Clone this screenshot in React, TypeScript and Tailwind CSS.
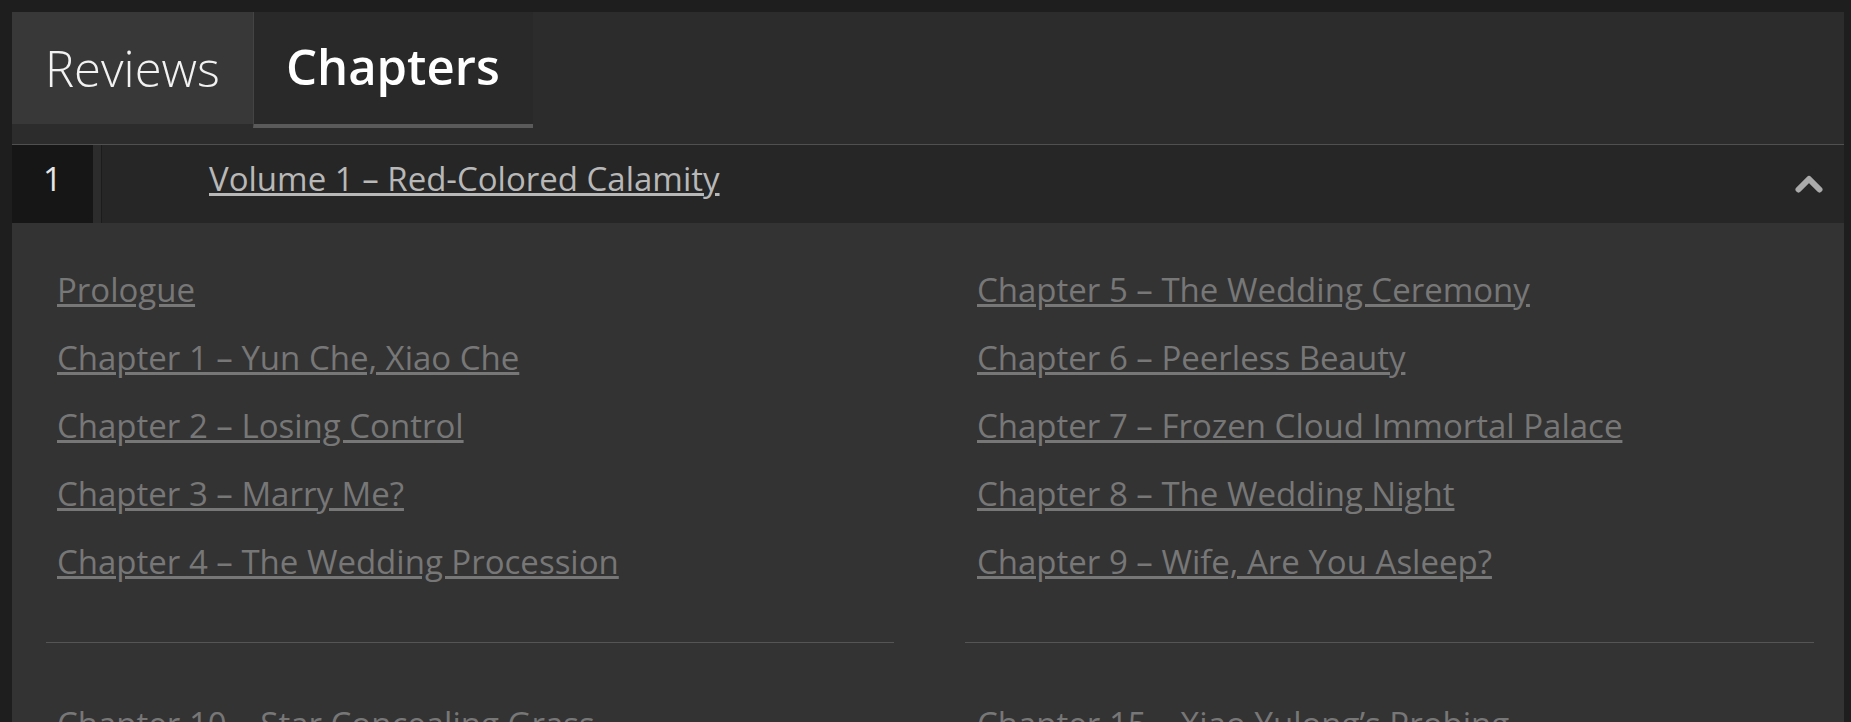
import React from "react";

const font = { fontFamily: '"Open Sans", "Noto Sans", sans-serif' };

const groups: [string[], string[]][] = [
  [
    [
      "Prologue",
      "Chapter 1 – Yun Che, Xiao Che",
      "Chapter 2 – Losing Control",
      "Chapter 3 – Marry Me?",
      "Chapter 4 – The Wedding Procession",
    ],
    [
      "Chapter 5 – The Wedding Ceremony",
      "Chapter 6 – Peerless Beauty",
      "Chapter 7 – Frozen Cloud Immortal Palace",
      "Chapter 8 – The Wedding Night",
      "Chapter 9 – Wife, Are You Asleep?",
    ],
  ],
  [
    [
      "Chapter 10 – Star Concealing Grass",
      "Chapter 11 – Grandfather’s Worries",
      "Chapter 12 – Heavenly Poison Pearl",
      "Chapter 13 – Evil God’s Profound Veins",
      "Chapter 14 – The Seven Wheels",
    ],
    [
      "Chapter 15 – Xiao Yulong’s Probing",
      "Chapter 16 – Sudden Change",
      "Chapter 17 – Bloody Night",
      "Chapter 18 – Facing Death",
      "Chapter 19 – Breaking Through",
    ],
  ],
];

function Column({ items, first, right }: { items: string[]; first: boolean; right: boolean }) {
  return (
    <div className="flex flex-col">
      <ul className={first ? "pt-[33px]" : "pt-[47px]"}>
        {items.map((t) => (
          <li
            key={t}
            className={
              right
                ? "pl-[12px] h-[68px] leading-[68px] text-[33px] text-[#777777] whitespace-nowrap"
                : "pl-[11px] h-[68px] leading-[68px] text-[33px] text-[#777777] whitespace-nowrap"
            }
          >
            <a href="#" className="underline">
              {t}
            </a>
          </li>
        ))}
      </ul>
      <div className="mt-[46px] h-px bg-[#555555]" />
    </div>
  );
}

export default function App() {
  return (
    <div className="w-[1851px] h-[722px] overflow-hidden bg-[#1e1e1e] pl-[12px] pr-[7px] pt-[12px]" style={font}>
      <div className="bg-[#2c2c2c] h-[800px]">
        {/* Tabs */}
        <div className="flex h-[133px] border-b border-[#505050]">
          <div className="w-[241px] h-[112px] bg-[#383838] flex items-center pl-[33px] pt-[1px] text-[49px] font-light text-[#f2f2f2]">
            Reviews
          </div>
          <div className="w-[280px] h-[116px] bg-[#292929] border-l border-[#444444] border-b-4 border-b-[#5a5a5a] flex items-center pl-[32px] pb-[2px] text-[49px] font-semibold text-white">
            Chapters
          </div>
        </div>

        {/* Volume header row */}
        <div className="flex items-center h-[78px] bg-[#262626]">
          <div className="w-[81px] h-full bg-[#161616] flex items-center justify-center pb-[10px] text-[33px] text-[#e6e6e6]">
            1
          </div>
          <div className="w-[8px] h-full bg-[#2c2c2c]" />
          <div className="w-px h-full bg-[#1c1c1c]" />
          <a href="#" className="pl-[107px] mb-[10px] text-[33px] text-[#b8b8b8] underline whitespace-nowrap">
            Volume 1 – Red-Colored Calamity
          </a>
          <div className="ml-auto pr-[21px] flex items-center">
            <svg width="28" height="18" viewBox="0 0 28 18">
              <polyline
                points="3.5,14.5 14,4 24.5,14.5"
                fill="none"
                stroke="#aaaaaa"
                strokeWidth="6"
                strokeLinecap="round"
                strokeLinejoin="round"
              />
            </svg>
          </div>
        </div>

        {/* Chapter list */}
        <div className="bg-[#333333] pl-[34px] pr-[30px] pb-[40px]">
          {groups.map(([left, right], gi) => (
            <div key={gi} className="grid grid-cols-[848px_849px] gap-x-[71px]">
              <Column items={left} first={gi === 0} right={false} />
              <Column items={right} first={gi === 0} right={true} />
            </div>
          ))}
        </div>
      </div>
    </div>
  );
}
